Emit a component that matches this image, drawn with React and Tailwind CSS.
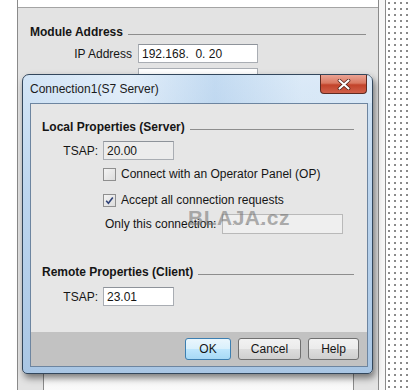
import React from "react";

function Heading({ children, className = "" }) {
  return (
    <div className={`flex items-center h-[15px] gap-[5px] ${className}`}>
      <span className="font-bold whitespace-nowrap">{children}</span>
      <div className="flex-1 h-px bg-[#8d8d8d] mt-[6px]" />
    </div>
  );
}

function Field({ value, w, disabled = false, className = "" }) {
  return (
    <div
      className={`h-[19px] ${w} border border-[#a9adb3] border-t-[#8e939a] flex items-center pl-[3px] whitespace-pre ${
        disabled ? "bg-[#ececec]" : "bg-white"
      } ${className}`}
    >
      {value}
    </div>
  );
}

function Check({ checked }) {
  return (
    <div className="w-[13px] h-[13px] border border-[#8f8f8f] bg-[linear-gradient(135deg,#f4f4f4,#dcdcdc)] flex items-center justify-center">
      {checked && (
        <svg width="11" height="11" viewBox="0 0 11 11">
          <path d="M2.2 5.8 L4.4 8.2 L8.8 2.4" fill="none" stroke="#2f4277" strokeWidth="1.6" />
        </svg>
      )}
    </div>
  );
}

function Btn({ children, w, primary = false }) {
  return (
    <div
      className={`h-[22px] ${w} rounded-[3px] border flex items-center justify-center ${
        primary
          ? "border-[#3c7fb1] bg-[linear-gradient(180deg,#eaf6fd_0%,#d9f0fc_50%,#bee6fd_51%,#a7d9f5_100%)]"
          : "border-[#707070] bg-[linear-gradient(180deg,#f2f2f2_0%,#ebebeb_50%,#dddddd_51%,#cfcfcf_100%)]"
      }`}
    >
      {children}
    </div>
  );
}

export default function App() {
  return (
    <div className="relative w-[410px] h-[390px] overflow-hidden bg-white flex font-['Liberation_Sans',Arial,sans-serif] text-[12px] text-[#151515]">
      {/* left strip */}
      <div className="w-[18px] shrink-0 bg-white border-r border-[#8a8a8a]" />

      {/* main panel column */}
      <div className="w-[360px] shrink-0 flex flex-col">
        <div className="h-[7px] bg-white" />
        <div className="flex-1 bg-[#e3e3e3] border-t border-[#a4a4a4] flex flex-col pt-[16px] px-[12px]">
          <Heading>Module Address</Heading>
          <div className="flex items-center mt-[5px]">
            <div className="w-[103px] text-right pr-[1px]">IP Address</div>
            <Field value="192.168.  0. 20" w="w-[120px]" className="ml-[5px]" />
          </div>
          <div className="ml-[108px] mt-[5px] w-[120px] h-[19px] bg-white border border-[#a9adb3]" />
          <div className="mt-auto ml-[13px] w-[311px] h-[40px] bg-[linear-gradient(180deg,#f2f2f2,#fafafa)] border-x border-[#8a8a8a]" />
        </div>
      </div>

      {/* right strip */}
      <div className="w-[8px] shrink-0 bg-[#f6f6f6] border-x border-[#8a8a8a]" />
      <div className="flex-1 bg-white bg-[radial-gradient(circle,#8a8a8a_0.8px,transparent_1px)] bg-[length:6px_6px]" />

      {/* dialog window */}
      <div className="absolute left-[22px] top-[74px] w-[351px] h-[300px] rounded-t-[7px] rounded-b-[5px] border border-[#33475c] bg-[linear-gradient(180deg,#d3e5f6_0%,#bcd5ee_40%,#a9c6e4_100%)] shadow-[2px_4px_7px_rgba(0,0,0,0.5)] flex flex-col pl-[7px] pr-[4px] pb-[6px]">
        <div className="relative h-[28px] flex items-center shrink-0 bg-[linear-gradient(90deg,rgba(255,255,255,0)_0%,rgba(255,255,255,0.35)_30%,rgba(160,195,230,0.3)_55%,rgba(255,255,255,0.2)_80%)] -ml-[7px] pl-[7px] -mr-[4px]">
          <span className="text-[12px] text-[#1b1b1b]">Connection1(S7 Server)</span>
          <div className="absolute right-[5px] top-0 w-[47px] h-[19px] rounded-b-[4px] border border-t-0 border-[#5e2b22] bg-[linear-gradient(180deg,#eba394_0%,#d97861_45%,#c2432a_55%,#d0604a_100%)] flex items-center justify-center">
            <svg width="14" height="11" viewBox="0 0 14 11">
              <path d="M2.5 1.5 L11.5 9.5 M11.5 1.5 L2.5 9.5" stroke="#4a1a12" strokeWidth="3.6" strokeLinecap="round" />
              <path d="M2.5 1.5 L11.5 9.5 M11.5 1.5 L2.5 9.5" stroke="#ffffff" strokeWidth="2.2" strokeLinecap="round" />
            </svg>
          </div>
        </div>

        <div className="flex-1 border border-[#6d85a0] bg-[#e6e6e6] flex flex-col">
          <div className="flex-1 flex flex-col pl-[11px] pr-[13px] pt-[15px]">
            <Heading>Local Properties (Server)</Heading>
            <div className="flex items-center mt-[7px]">
              <div className="w-[56px] text-right">TSAP:</div>
              <Field value="20.00" w="w-[71px]" disabled className="ml-[5px] h-[19px]" />
            </div>
            <div className="flex items-center h-[16px] mt-[6px] ml-[61px] gap-[5px]">
              <Check />
              <span>Connect with an Operator Panel (OP)</span>
            </div>
            <div className="flex items-center h-[16px] mt-[10px] ml-[61px] gap-[5px]">
              <Check checked />
              <span>Accept all connection requests</span>
            </div>
            <div className="flex items-center mt-[6px] ml-[63px]">
              <div className="w-[117px]">Only this connection:</div>
              <div className="h-[20px] w-[121px] bg-[#efefef] border border-[#b9b9b9] text-[#9a9a9a] text-[10px] whitespace-pre leading-[14px] pl-[9px]">
                {".    .    ."}
              </div>
            </div>
            <Heading className="mt-[30px]">Remote Properties (Client)</Heading>
            <div className="flex items-center mt-[8px]">
              <div className="w-[56px] text-right">TSAP:</div>
              <Field value="23.01" w="w-[71px]" className="ml-[5px]" />
            </div>
          </div>
          <div className="h-[34px] shrink-0 bg-[#c2c2c2] flex items-start justify-end gap-[7px] pt-[6px] pr-[8px]">
            <Btn w="w-[46px]" primary>OK</Btn>
            <Btn w="w-[63px]">Cancel</Btn>
            <Btn w="w-[51px]">Help</Btn>
          </div>
        </div>
      </div>

      {/* watermark */}
      <div className="absolute left-[188px] top-[202px] text-[21px] font-bold tracking-[0.5px] text-[rgba(110,110,110,0.55)] pointer-events-none">
        BLAJA.cz
      </div>
    </div>
  );
}
